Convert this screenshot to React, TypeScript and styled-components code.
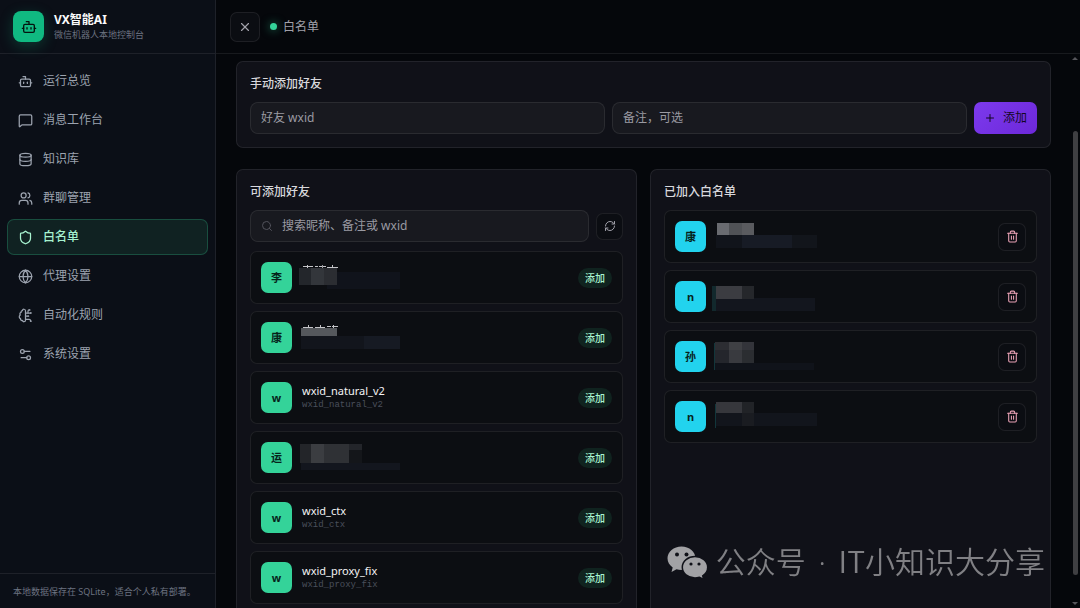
import React from "react";
import styled, { createGlobalStyle } from "styled-components";
import {
  Bot,
  Database,
  Globe,
  MessageSquare,
  Plus,
  RefreshCw,
  Search,
  Settings2,
  Shield,
  Trash2,
  Users,
  X,
} from "lucide-react";

const sans = '"Noto Sans", "Noto Sans CJK SC", sans-serif';
const mono = '"Liberation Mono", "Noto Sans CJK SC", monospace';
const line = "rgba(255, 255, 255, 0.08)";

const GlobalStyle = createGlobalStyle`
  *, *::before, *::after { box-sizing: border-box; }
  body {
    margin: 0;
    background: #05070b;
    color: #e4e4e7;
    font-family: ${sans};
    font-size: 12px;
    line-height: 18px;
  }
  button, input { font: inherit; color: inherit; margin: 0; }
  button { cursor: pointer; padding: 0; }
`;

const Shell = styled.div`
  display: flex;
  height: 100vh;
  overflow: hidden;
`;

const Sidebar = styled.aside`
  display: flex;
  flex-direction: column;
  flex: 0 0 216px;
  background: #0b0f17;
  border-right: 1px solid ${line};
`;

const Brand = styled.div`
  display: flex;
  align-items: center;
  gap: 10px;
  height: 54px;
  padding: 0 13px;
  border-bottom: 1px solid ${line};
`;

const BrandMark = styled.div`
  display: grid;
  place-items: center;
  width: 31px;
  height: 31px;
  border-radius: 8px;
  background: #10b981;
  color: #04140f;
  box-shadow: 0 4px 14px rgba(16, 185, 129, 0.25);
`;

const BrandName = styled.div`
  font-weight: 700;
  line-height: 16px;
  color: #fafafa;
`;

const BrandNote = styled.div`
  font-size: 9px;
  line-height: 13px;
  color: #6b7280;
`;

const Nav = styled.nav`
  display: flex;
  flex: 1;
  flex-direction: column;
  gap: 3px;
  padding: 9px 7px;
`;

const NavItem = styled.a<{ $active?: boolean }>`
  display: flex;
  align-items: center;
  gap: 10px;
  height: 36px;
  padding: 0 10px;
  border: 1px solid ${(p) => (p.$active ? "rgba(52, 211, 153, 0.25)" : "transparent")};
  border-radius: 7px;
  background: ${(p) => (p.$active ? "#102222" : "transparent")};
  color: ${(p) => (p.$active ? "#a7f3d0" : "#9ca3af")};
  font-weight: ${(p) => (p.$active ? 500 : 400)};
  text-decoration: none;
`;

const SideNote = styled.div`
  height: 35px;
  padding: 9px 13px;
  border-top: 1px solid ${line};
  font-size: 9px;
  white-space: nowrap;
  color: #6b7280;
`;

const Main = styled.main`
  display: flex;
  flex: 1;
  flex-direction: column;
  min-width: 0;
`;

const TopBar = styled.header`
  display: flex;
  flex: 0 0 54px;
  align-items: center;
  padding: 0 14px;
  border-bottom: 1px solid ${line};
`;

const IconButton = styled.button<{ $size: number; $tone?: string }>`
  display: grid;
  place-items: center;
  flex: none;
  width: ${(p) => p.$size}px;
  height: ${(p) => p.$size}px;
  border: 1px solid ${line};
  border-radius: 7px;
  background: #0b0d12;
  color: ${(p) => p.$tone ?? "#a1a1aa"};
`;

const StatusDot = styled.span`
  width: 7px;
  height: 7px;
  margin: 0 6px 0 10px;
  border-radius: 50%;
  background: #34d399;
  box-shadow: 0 0 10px rgba(52, 211, 153, 0.6);
`;

const PageTitle = styled.h1`
  margin: 0;
  font-size: 12px;
  font-weight: 400;
  color: #a1a1aa;
`;

const Body = styled.div`
  display: flex;
  flex: 1;
  min-height: 0;
`;

const Content = styled.div`
  display: flex;
  flex: 1;
  flex-direction: column;
  gap: 21px;
  min-width: 0;
  padding: 7px 20px 20px;
  overflow-y: auto;
  scrollbar-width: none;
`;

const Panel = styled.section`
  padding: 13px;
  border: 1px solid ${line};
  border-radius: 7px;
  background: #101118;
`;

const PanelTitle = styled.h2`
  margin: 0 0 9px;
  font-size: 12px;
  font-weight: 500;
  color: #d8d8dc;
`;

const Columns = styled.div`
  display: grid;
  grid-template-columns: 1fr 1fr;
  gap: 13px;
`;

const FormRow = styled.form`
  display: flex;
  align-items: center;
  gap: 7px;
`;

const Field = styled.label`
  display: flex;
  flex: 1;
  align-items: center;
  gap: 9px;
  min-width: 0;
  height: 32px;
  padding: 0 10px;
  border: 1px solid ${line};
  border-radius: 8px;
  background: #18191f;
  color: #52525b;
`;

const TextInput = styled.input`
  flex: 1;
  min-width: 0;
  padding: 0;
  border: 0;
  outline: 0;
  background: none;
  color: #e4e4e7;
  &::placeholder {
    color: #9a9aa2;
    opacity: 1;
  }
`;

const PrimaryButton = styled.button`
  display: flex;
  align-items: center;
  justify-content: center;
  gap: 7px;
  width: 63px;
  height: 32px;
  border: 0;
  border-radius: 7px;
  background: linear-gradient(135deg, #7c3aed, #6d28d9);
  color: #12071f;
`;

const List = styled.ul<{ $top?: number }>`
  display: flex;
  flex-direction: column;
  gap: 7px;
  margin: ${(p) => p.$top ?? 0}px 0 0;
  padding: 0;
  list-style: none;
`;

const Item = styled.li`
  display: flex;
  align-items: center;
  gap: 10px;
  height: 53px;
  padding: 0 10px;
  border: 1px solid ${line};
  border-radius: 7px;
  background: #0c0e12;
`;

const Avatar = styled.span<{ $color: string }>`
  display: grid;
  place-items: center;
  flex: none;
  width: 31px;
  height: 31px;
  border-radius: 7px;
  background: ${(p) => p.$color};
  color: #06231b;
  font-size: 11px;
  font-weight: 700;
`;

const Person = styled.div`
  flex: 1;
  min-width: 0;
`;

const PersonName = styled.div`
  font-size: 11px;
  line-height: 16px;
  color: #f4f4f5;
`;

const PersonId = styled.div`
  font-family: ${mono};
  font-size: 9px;
  line-height: 13px;
  color: #4a4f5b;
`;

const MosaicArt = styled.svg`
  display: block;
  overflow: visible;
`;

const Pill = styled.button`
  height: 20px;
  padding: 0 7px;
  border: 0;
  border-radius: 10px;
  background: #10231f;
  color: #a7f3d0;
  font-size: 10px;
  font-weight: 500;
`;

const ScrollTrack = styled.div`
  display: flex;
  flex: 0 0 9px;
  flex-direction: column;
  align-items: center;
  justify-content: space-between;
  padding: 3px 1px 3px 0;
`;

const ScrollThumb = styled.div`
  flex: 0 1 444px;
  width: 5px;
  margin: 68px 0 24px;
  border-radius: 3px;
  background: #3f3f42;
`;

const Arrow = styled.svg`
  flex: none;
  fill: #55555a;
`;

const Watermark = styled.div`
  position: fixed;
  right: 35px;
  bottom: 20px;
  display: flex;
  align-items: center;
  gap: 8px;
  color: #808084;
  font-family: "Noto Sans CJK SC", sans-serif;
  font-size: 30px;
  font-weight: 350;
  line-height: 44px;
  white-space: nowrap;
  pointer-events: none;
`;

const WatermarkText = styled.span`
  padding-bottom: 4px;
`;

const MiddleDot = styled.span`
  margin: 0 5px;
  font-family: "Noto Sans", sans-serif;
`;

// Each block is [x, y, width, height, colour], measured from the text column.
type Block = [number, number, number, number, string];

function Mosaic({ blocks }: { blocks: Block[] }) {
  return (
    <MosaicArt width="120" height="31" viewBox="0 0 120 31" aria-hidden="true" shapeRendering="crispEdges">
      {blocks.map(([x, y, w, h, fill], i) => (
        <rect key={i} x={x} y={y} width={w} height={h} fill={fill} />
      ))}
    </MosaicArt>
  );
}

// Half brain with circuit branches.
function BrainIcon({ size = 24 }: { size?: number }) {
  return (
    <svg
      width={size}
      height={size}
      viewBox="0 0 24 24"
      fill="none"
      stroke="currentColor"
      strokeWidth="2"
      strokeLinecap="round"
      strokeLinejoin="round"
      aria-hidden="true"
    >
      <path d="M12 4.5a2.5 2.5 0 0 0-4.96-.46 2.5 2.5 0 0 0-1.98 3 2.5 2.5 0 0 0-1.32 4.24 3 3 0 0 0 .34 5.58 2.5 2.5 0 0 0 2.96 3.08A2.5 2.5 0 0 0 12 19.5z" />
      <path d="M16 8V5c0-1.1.9-2 2-2" />
      <path d="M12 13h4" />
      <path d="M12 18h6a2 2 0 0 1 2 2v1" />
      <path d="M12 8h8" />
      <circle cx="20.5" cy="8" r=".5" />
      <circle cx="16.5" cy="13" r=".5" />
      <circle cx="20.5" cy="21" r=".5" />
      <circle cx="18.5" cy="3" r=".5" />
    </svg>
  );
}

const navItems: { label: string; icon: React.ComponentType<{ size?: number }>; active?: boolean }[] = [
  { label: "运行总览", icon: Bot },
  { label: "消息工作台", icon: MessageSquare },
  { label: "知识库", icon: Database },
  { label: "群聊管理", icon: Users },
  { label: "白名单", icon: Shield, active: true },
  { label: "代理设置", icon: Globe },
  { label: "自动化规则", icon: BrainIcon },
  { label: "系统设置", icon: Settings2 },
];

interface Entry {
  initial: string;
  name?: string;
  blocks?: Block[];
}

const candidates: Entry[] = [
  {
    initial: "李",
    blocks: [
      [1, 4, 10, 1, "#c4c4c8"],
      [5, 3, 1, 3, "#c4c4c8"],
      [13, 4, 3, 1, "#c4c4c8"],
      [17, 4, 7, 1, "#c4c4c8"],
      [20, 3, 1, 3, "#a0a0a4"],
      [25, 5, 11, 1, "#c4c4c8"],
      [30, 3, 1, 2, "#c4c4c8"],
      [25, 10, 73, 17, "#10131b"],
      [-3, 6, 12, 17, "#23262b"],
      [9, 6, 13, 17, "#33363b"],
      [22, 6, 13, 17, "#2b2d32"],
    ],
  },
  {
    initial: "康",
    blocks: [
      [1, 5, 10, 1, "#c4c4c8"],
      [6, 3, 1, 2, "#c4c4c8"],
      [13, 5, 10, 1, "#c4c4c8"],
      [18, 3, 1, 2, "#c4c4c8"],
      [25, 4, 4, 1, "#c4c4c8"],
      [30, 4, 6, 1, "#c4c4c8"],
      [31, 3, 1, 3, "#c4c4c8"],
      [-1, 14, 63, 13, "#12151c"],
      [62, 14, 36, 13, "#161a23"],
      [-1, 6, 36, 8, "#55585c"],
    ],
  },
  { initial: "w", name: "wxid_natural_v2" },
  {
    initial: "运",
    blocks: [
      [-1, 21, 99, 7, "#13161e"],
      [-2, 2, 11, 19, "#232529"],
      [9, 2, 13, 19, "#3b3d41"],
      [22, 2, 25, 19, "#2f3135"],
      [47, 2, 13, 6, "#23252a"],
      [47, 8, 13, 13, "#14161a"],
    ],
  },
  { initial: "w", name: "wxid_ctx" },
  { initial: "w", name: "wxid_proxy_fix" },
];

const members: Entry[] = [
  {
    initial: "康",
    blocks: [
      [0, 14, 26, 13, "#11141b"],
      [26, 14, 50, 13, "#171b25"],
      [76, 14, 25, 13, "#12151b"],
      [1, 2, 12, 12, "#696b70"],
      [13, 2, 13, 12, "#505256"],
      [26, 2, 12, 12, "#5a5b5f"],
    ],
  },
  {
    initial: "n",
    blocks: [
      [-4, 5, 4, 25, "#12292d"],
      [0, 17, 99, 13, "#13161e"],
      [0, 5, 26, 13, "#3b3c41"],
      [26, 5, 12, 13, "#25272b"],
    ],
  },
  {
    initial: "孙",
    blocks: [
      [-2, 2, 1, 27, "#12363b"],
      [-1, 22, 99, 7, "#10131a"],
      [-1, 1, 14, 8, "#2c2d32"],
      [13, 1, 13, 8, "#3f4044"],
      [26, 1, 12, 8, "#33343a"],
      [-1, 9, 14, 13, "#24262c"],
      [13, 9, 13, 13, "#393a3f"],
      [26, 9, 12, 13, "#2b2d31"],
    ],
  },
  {
    initial: "n",
    blocks: [
      [-1, 3, 1, 24, "#12363b"],
      [0, 12, 101, 13, "#12151c"],
      [26, 12, 12, 13, "#1a1c21"],
      [0, 1, 26, 11, "#36373c"],
      [26, 1, 12, 11, "#212327"],
    ],
  },
];

function EntryText({ entry }: { entry: Entry }) {
  return (
    <Person>
      {entry.blocks ? (
        <Mosaic blocks={entry.blocks} />
      ) : (
        <>
          <PersonName>{entry.name}</PersonName>
          <PersonId>{entry.name}</PersonId>
        </>
      )}
    </Person>
  );
}

export default function App() {
  return (
    <>
      <GlobalStyle />
      <Shell>
        <Sidebar>
          <Brand>
            <BrandMark>
              <Bot size={16} />
            </BrandMark>
            <div>
              <BrandName>VX智能AI</BrandName>
              <BrandNote>微信机器人本地控制台</BrandNote>
            </div>
          </Brand>
          <Nav>
            {navItems.map(({ label, icon: Icon, active }) => (
              <NavItem key={label} href="#" $active={active} aria-current={active ? "page" : undefined}>
                <Icon size={15} />
                {label}
              </NavItem>
            ))}
          </Nav>
          <SideNote>本地数据保存在 SQLite，适合个人私有部署。</SideNote>
        </Sidebar>

        <Main>
          <TopBar>
            <IconButton $size={30} type="button" aria-label="关闭">
              <X size={14} />
            </IconButton>
            <StatusDot />
            <PageTitle>白名单</PageTitle>
          </TopBar>

          <Body>
            <Content>
              <Panel>
                <PanelTitle>手动添加好友</PanelTitle>
                <FormRow onSubmit={(e) => e.preventDefault()}>
                  <Field>
                    <TextInput placeholder="好友 wxid" aria-label="好友 wxid" />
                  </Field>
                  <Field>
                    <TextInput placeholder="备注，可选" aria-label="备注，可选" />
                  </Field>
                  <PrimaryButton type="submit">
                    <Plus size={12} />
                    添加
                  </PrimaryButton>
                </FormRow>
              </Panel>

              <Columns>
                <Panel>
                  <PanelTitle>可添加好友</PanelTitle>
                  <FormRow onSubmit={(e) => e.preventDefault()}>
                    <Field>
                      <Search size={12} />
                      <TextInput placeholder="搜索昵称、备注或 wxid" aria-label="搜索昵称、备注或 wxid" />
                    </Field>
                    <IconButton $size={27} type="button" aria-label="刷新">
                      <RefreshCw size={12} />
                    </IconButton>
                  </FormRow>
                  <List $top={9}>
                    {candidates.map((entry, i) => (
                      <Item key={i}>
                        <Avatar $color="#34d399">{entry.initial}</Avatar>
                        <EntryText entry={entry} />
                        <Pill type="button">添加</Pill>
                      </Item>
                    ))}
                  </List>
                </Panel>

                <Panel>
                  <PanelTitle>已加入白名单</PanelTitle>
                  <List>
                    {members.map((entry, i) => (
                      <Item key={i}>
                        <Avatar $color="#22d3ee">{entry.initial}</Avatar>
                        <EntryText entry={entry} />
                        <IconButton $size={28} $tone="#e8a0b4" type="button" aria-label="移除">
                          <Trash2 size={13} />
                        </IconButton>
                      </Item>
                    ))}
                  </List>
                </Panel>
              </Columns>
            </Content>

            <ScrollTrack aria-hidden="true">
              <Arrow width="6" height="3" viewBox="0 0 6 3">
                <path d="M0 3 3 0l3 3z" />
              </Arrow>
              <ScrollThumb />
              <Arrow width="6" height="3" viewBox="0 0 6 3">
                <path d="M0 0h6L3 3z" />
              </Arrow>
            </ScrollTrack>
          </Body>
        </Main>
      </Shell>

      <Watermark>
        <svg width="41" height="34" viewBox="0 0 41 34" aria-hidden="true">
          <path
            fill="#a2a2a5"
            d="M14.5.5C6.700.5.500 5.700.500 12.300c0 3.800 2 7 5.200 9.200L4.500 26l5-2.700c1.600.4 3.200.7 5 .7 7.800 0 14-5.200 14-11.700S22.300.5 14.500.5z"
          />
          <g fill="#101118">
            <circle cx="10" cy="8.500" r="2" />
            <circle cx="19.500" cy="8.500" r="2" />
          </g>
          <path
            fill="#a2a2a5"
            stroke="#101118"
            strokeWidth="1.500"
            d="M28 10.500c-7 0-12.700 4.700-12.700 10.700S21 32 28 32c1.500 0 3-.3 4.400-.7l4.300 2.200-1-3.700c3-2 5-5 5-8.600 0-6-5.700-10.700-12.700-10.700z"
          />
          <g fill="#101118">
            <circle cx="24" cy="18" r="1.600" />
            <circle cx="32" cy="18" r="1.600" />
          </g>
        </svg>
        <WatermarkText>
          公众号<MiddleDot> · </MiddleDot>IT小知识大分享
        </WatermarkText>
      </Watermark>
    </>
  );
}
